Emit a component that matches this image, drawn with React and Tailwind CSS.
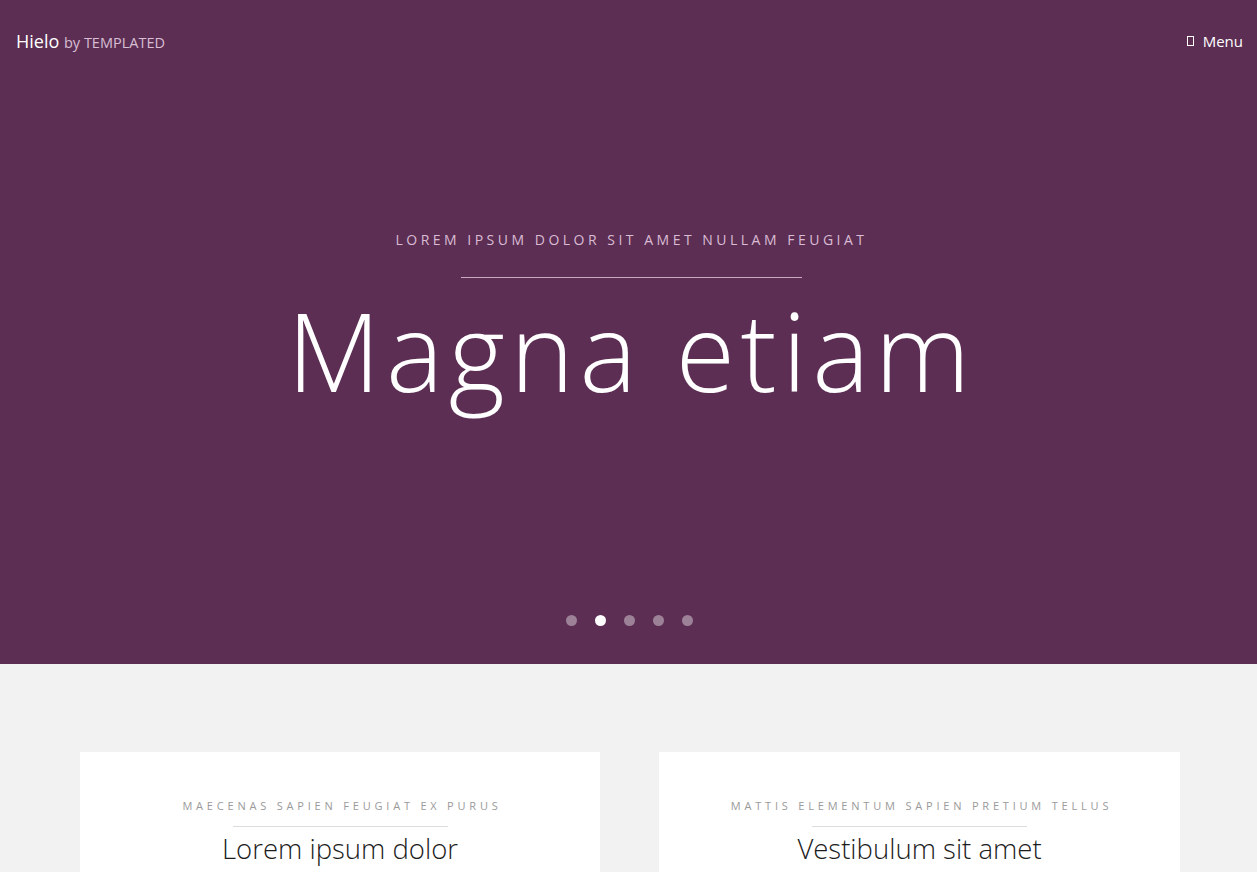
import { useState } from 'react'

const font = { fontFamily: '"Open Sans", "Liberation Sans", sans-serif' }

function Header() {
  return (
    <header className="flex items-center justify-between pl-4 pr-[14px] h-[82px]">
      <a className="text-white text-[18px] font-normal">
        Hielo <span className="text-[14.5px] text-[#d8bfd3]">by TEMPLATED</span>
      </a>
      <a className="flex items-center gap-[9px] text-white text-[15px]">
        <span className="inline-block w-[7px] h-[10px] border border-white" />
        Menu
      </a>
    </header>
  )
}

function Banner() {
  const [active, setActive] = useState(1)
  return (
    <section className="bg-[#5c2e53] h-[664px] flex flex-col">
      <Header />
      <div className="flex flex-col items-center pt-[147px] pl-[6px]">
        <p className="text-[14px] tracking-[3.5px] text-[#d9bcd3] uppercase">
          Lorem ipsum dolor sit amet nullam feugiat
        </p>
        <div className="w-[341px] h-px bg-[#c9a9c2] mt-[27px]" />
        <h2 className="text-white text-[108px] font-light leading-none mt-[19px] tracking-[5.5px]">
          Magna etiam
        </h2>
      </div>
      <div className="mt-auto mb-[38px] flex justify-center gap-[18px] pl-[1px]">
        {[0, 1, 2, 3, 4].map((i) => (
          <button
            key={i}
            onClick={() => setActive(i)}
            className={`w-[11px] h-[11px] rounded-full ${i === active ? 'bg-white' : 'bg-white/40'}`}
          />
        ))}
      </div>
    </section>
  )
}

function Card({ sub, title }) {
  return (
    <div className="bg-white flex flex-col items-center pt-[46px] h-[140px]">
      <p className="text-[11px] tracking-[3.8px] text-[#9a9a9a] uppercase pl-[4px]">{sub}</p>
      <div className="w-[215px] h-px bg-[#dcdcdc] mt-[11px]" />
      <h3 className="text-[27.5px] text-[#1c1c1c] font-light mt-[5px] leading-tight">{title}</h3>
    </div>
  )
}

export default function App() {
  return (
    <div className="min-h-screen bg-[#f2f2f2]" style={font}>
      <Banner />
      <main className="pl-[80px] pt-[88px] grid grid-cols-[520px_521px] gap-[59px]">
        <Card sub="Maecenas sapien feugiat ex purus" title="Lorem ipsum dolor" />
        <Card sub="Mattis elementum sapien pretium tellus" title="Vestibulum sit amet" />
      </main>
    </div>
  )
}
